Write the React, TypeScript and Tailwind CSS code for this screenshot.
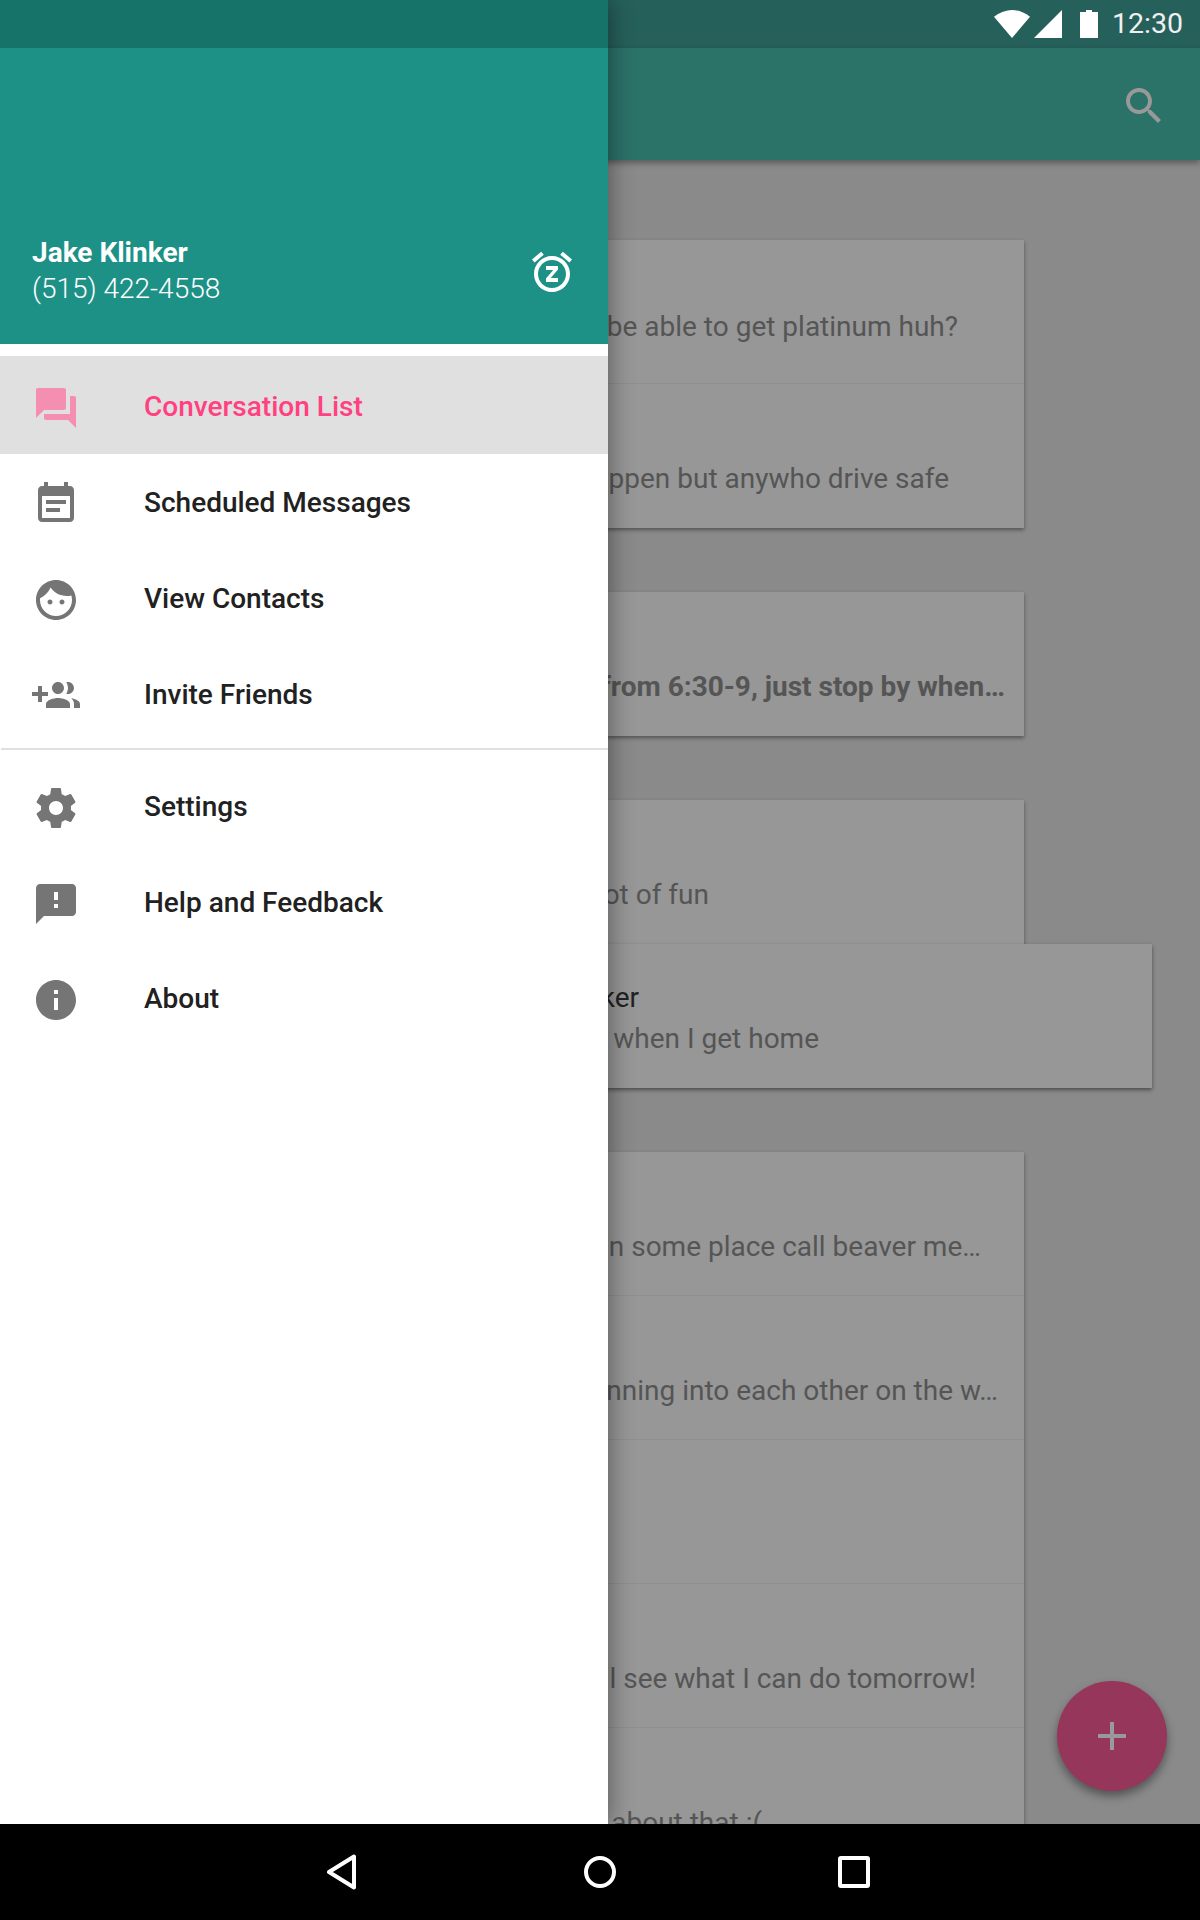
import type { ReactNode } from "react";

const ROBOTO = "[font-family:Roboto,sans-serif]";

function Icon({ d, className }: { d: string; className?: string }) {
  return (
    <svg viewBox="0 0 24 24" fill="currentColor" className={`size-12 shrink-0 ${className ?? ""}`}>
      <path d={d} />
    </svg>
  );
}

const paths = {
  forum:
    "M21 6h-2v9H6v2c0 .55.45 1 1 1h11l4 4V7c0-.55-.45-1-1-1zm-4 6V3c0-.55-.45-1-1-1H3c-.55 0-1 .45-1 1v14l4-4h10c.55 0 1-.45 1-1z",
  event:
    "M17 10H7v2h10v-2zm2-7h-1V1h-2v2H8V1H6v2H5c-1.11 0-1.99.9-1.99 2L3 19c0 1.1.89 2 2 2h14c1.1 0 2-.9 2-2V5c0-1.1-.9-2-2-2zm0 16H5V8h14v11zm-5-5H7v2h7v-2z",
  face:
    "M9 11.75c-.69 0-1.25.56-1.25 1.25s.56 1.25 1.25 1.25 1.25-.56 1.25-1.25-.56-1.25-1.25-1.25zm6 0c-.69 0-1.25.56-1.25 1.25s.56 1.25 1.25 1.25 1.25-.56 1.25-1.25-.56-1.25-1.25-1.25zM12 2C6.48 2 2 6.48 2 12s4.48 10 10 10 10-4.48 10-10S17.52 2 12 2zm0 18c-4.41 0-8-3.59-8-8 0-.29.02-.58.05-.86 2.36-1.05 4.23-2.98 5.21-5.37C11.07 8.33 14.05 10 17.42 10c.78 0 1.53-.09 2.25-.26.21.71.33 1.47.33 2.26 0 4.41-3.59 8-8 8z",
  groupAdd:
    "M8 10H5V7H3v3H0v2h3v3h2v-3h3v-2zm10 1c1.66 0 2.99-1.34 2.99-3S19.66 5 18 5c-.32 0-.63.05-.91.14.57.81.9 1.79.9 2.86s-.34 2.04-.9 2.86c.28.09.59.14.91.14zm-5 0c1.66 0 2.99-1.34 2.99-3S14.66 5 13 5c-1.66 0-3 1.34-3 3s1.34 3 3 3zm6.62 2.16c.83.73 1.38 1.66 1.38 2.84v2h3v-2c0-1.54-2.37-2.49-4.38-2.84zM13 13c-2 0-6 1-6 3v2h12v-2c0-2-4-3-6-3z",
  settings:
    "M19.43 12.98c.04-.32.07-.64.07-.98s-.03-.66-.07-.98l2.11-1.65c.19-.15.24-.42.12-.64l-2-3.46c-.12-.22-.39-.3-.61-.22l-2.49 1c-.52-.4-1.08-.73-1.69-.98l-.38-2.65C14.46 2.18 14.25 2 14 2h-4c-.25 0-.46.18-.49.42l-.38 2.65c-.61.25-1.17.59-1.69.98l-2.49-1c-.23-.09-.49 0-.61.22l-2 3.46c-.13.22-.07.49.12.64l2.11 1.65c-.04.32-.07.65-.07.98s.03.66.07.98l-2.11 1.65c-.19.15-.24.42-.12.64l2 3.46c.12.22.39.3.61.22l2.49-1c.52.4 1.08.73 1.69.98l.38 2.65c.03.24.24.42.49.42h4c.25 0 .46-.18.49-.42l.38-2.65c.61-.25 1.17-.59 1.69-.98l2.49 1c.23.09.49 0 .61-.22l2-3.46c.12-.22.07-.49-.12-.64l-2.11-1.65zM12 15.5c-1.93 0-3.5-1.57-3.5-3.5s1.57-3.5 3.5-3.5 3.5 1.57 3.5 3.5-1.57 3.5-3.5 3.5z",
  feedback:
    "M20 2H4c-1.1 0-1.99.9-1.99 2L2 22l4-4h14c1.1 0 2-.9 2-2V4c0-1.1-.9-2-2-2zm-7 12h-2v-2h2v2zm0-4h-2V6h2v4z",
  info: "M12 2C6.48 2 2 6.48 2 12s4.48 10 10 10 10-4.48 10-10S17.52 2 12 2zm1 15h-2v-6h2v6zm0-8h-2V7h2v2z",
  snooze:
    "M9 11h3.63L9 15.2V17h6v-2h-3.63L15 10.8V9H9v2zm13-5.28l-4.6-3.86-1.29 1.53 4.6 3.86L22 5.72zM7.88 3.39L6.6 1.86 2 5.71l1.29 1.53 4.59-3.85zM12 4c-4.97 0-9 4.03-9 9s4.02 9 9 9c4.97 0 9-4.03 9-9s-4.03-9-9-9zm0 16c-3.87 0-7-3.13-7-7s3.13-7 7-7 7 3.13 7 7-3.13 7-7 7z",
  search:
    "M15.5 14h-.79l-.28-.27C15.41 12.59 16 11.11 16 9.5 16 5.91 13.09 3 9.5 3S3 5.91 3 9.5 5.91 16 9.5 16c1.61 0 3.09-.59 4.23-1.57l.27.28v.79l5 4.99L20.49 19l-4.99-5zm-6 0C7.01 14 5 11.99 5 9.5S7.01 5 9.5 5 14 7.01 14 9.5 11.99 14 9.5 14z",
};

function StatusBar() {
  return (
    <div className="flex h-12 shrink-0 items-center justify-end bg-[#26605b] pr-[17px]">
      <svg viewBox="0 0 36 28" className="h-7 w-9" fill="#fff">
        <path d="M0 6.7Q18 -6.7 36 6.7L18 28Z" />
      </svg>
      <svg viewBox="0 0 28 28" className="ml-1 size-7" fill="#fff">
        <path d="M28 0V28H0Z" />
      </svg>
      <svg viewBox="0 0 18 28" className="ml-[18px] h-7 w-[18px]" fill="#fff">
        <path d="M6 0H12V2H18V28H0V2H6Z" />
      </svg>
      <span className="ml-[14px] text-[28.5px] leading-none text-[#f0f0f0]">12:30</span>
    </div>
  );
}

function Row({ children, className }: { children?: ReactNode; className: string }) {
  return (
    <div className={`flex h-36 items-start justify-end whitespace-nowrap border-[#8f8f8f] text-[28px] leading-10 text-[#555] ${className}`}>
      {children}
    </div>
  );
}

function ConversationList() {
  return (
    <div className="flex flex-1 flex-col overflow-hidden bg-[#8a8a8a] px-[176px] pt-20">
      <div className="shrink-0 bg-[#979797] shadow-[0_2px_4px_rgba(0,0,0,0.4)]">
        <Row className="border-b pt-[67px] pr-[66px]">be able to get platinum huh?</Row>
        <Row className="pt-[75px] pr-[75px]">ppen but anywho drive safe</Row>
      </div>
      <div className="mt-16 shrink-0 bg-[#979797] shadow-[0_2px_4px_rgba(0,0,0,0.4)]">
        <Row className="pt-[75px] pr-[19px] font-bold">from 6:30-9, just stop by when…</Row>
      </div>
      <div className="mt-16 shrink-0 bg-[#979797] shadow-[0_2px_4px_rgba(0,0,0,0.4)]">
        <Row className="pt-[75px] pr-[315px]">ot of fun</Row>
      </div>
      <div className="relative -mx-32 shrink-0 bg-[#979797] shadow-[0_2px_4px_rgba(0,0,0,0.45)]">
        <div className="flex h-36 flex-col items-end whitespace-nowrap pt-[34px] text-[28px] leading-10">
          <div className="pr-[513px] text-[#222]">ker</div>
          <div className="pr-[333px] pt-px text-[#555]">when I get home</div>
        </div>
      </div>
      <div className="mt-16 shrink-0 bg-[#979797] shadow-[0_2px_4px_rgba(0,0,0,0.4)]">
        <Row className="border-b pt-[75px] pr-[43px]">n some place call beaver me…</Row>
        <Row className="border-b pt-[75px] pr-[26px]">nning into each other on the w…</Row>
        <Row className="border-b" />
        <Row className="border-b pt-[75px] pr-[48px]">l see what I can do tomorrow!</Row>
        <Row className="pt-[75px] pr-[262px]">about that :(</Row>
      </div>
    </div>
  );
}

const topItems = [
  { label: "Conversation List", d: paths.forum, row: "h-[98px] bg-[#e0e0e0] text-[#ff4081]", icon: "mt-1.5 text-[#f48fb1]", text: "mt-1" },
  { label: "Scheduled Messages", d: paths.event, row: "h-24 text-[#212121]", icon: "mt-1 text-[#757575]", text: "mt-0.5" },
  { label: "View Contacts", d: paths.face, row: "h-24 text-[#212121]", icon: "mt-1 text-[#757575]", text: "mt-0.5" },
  { label: "Invite Friends", d: paths.groupAdd, row: "h-24 text-[#212121]", icon: "mt-1 text-[#757575]", text: "mt-0.5" },
];

const bottomItems = [
  { label: "Settings", d: paths.settings, row: "h-24 text-[#212121]", icon: "mt-1 text-[#757575]", text: "mt-0.5" },
  { label: "Help and Feedback", d: paths.feedback, row: "h-24 text-[#212121]", icon: "mt-1 text-[#757575]", text: "mt-0.5" },
  { label: "About", d: paths.info, row: "h-24 text-[#212121]", icon: "mt-1 text-[#757575]", text: "mt-0.5" },
];

function DrawerItem({ label, d, row, icon, text }: { label: string; d: string; row: string; icon: string; text: string }) {
  return (
    <div className={`flex items-center pl-8 text-[28px] font-medium ${row}`}>
      <Icon d={d} className={icon} />
      <span className={`ml-16 ${text}`}>{label}</span>
    </div>
  );
}

function Drawer() {
  return (
    <div className="absolute top-0 left-0 z-20 flex h-[1824px] w-[608px] flex-col bg-white shadow-[0_0_24px_rgba(0,0,0,0.45)]">
      <div className="h-12 shrink-0 bg-[#167369]" />
      <div className="flex h-[296px] shrink-0 items-end justify-between bg-[#1e9187] text-[28px] leading-9 text-white">
        <div className="pb-[37px] pl-8">
          <div className="font-bold">Jake Klinker</div>
          <div className="font-light">(515) 422-4558</div>
        </div>
        <Icon d={paths.snooze} className="mr-8 mb-12" />
      </div>
      <div className="pt-3">
        {topItems.map((item) => (
          <DrawerItem key={item.label} {...item} />
        ))}
      </div>
      <div className="mt-1.5 ml-px h-0.5 bg-[#e0e0e0]" />
      <div className="pt-2">
        {bottomItems.map((item) => (
          <DrawerItem key={item.label} {...item} />
        ))}
      </div>
    </div>
  );
}

function NavBar() {
  return (
    <div className="relative z-30 flex h-24 shrink-0 items-center bg-black pl-[324px]">
      <svg viewBox="0 0 36 36" className="size-9" fill="none" stroke="#fff" strokeWidth="4" strokeLinejoin="round">
        <path d="M5 18L30 2.5V33.5Z" />
      </svg>
      <div className="ml-56 size-8 rounded-full border-4 border-white" />
      <div className="ml-[222px] size-8 rounded-[3px] border-4 border-white" />
    </div>
  );
}

export default function App() {
  return (
    <div className={`relative flex h-[1920px] w-[1200px] flex-col overflow-hidden ${ROBOTO}`}>
      <StatusBar />
      <div className="relative z-10 flex h-28 shrink-0 items-start justify-end bg-[#2b7269] pt-[34px] pr-8 text-[#999] shadow-[0_3px_6px_rgba(0,0,0,0.35)]">
        <Icon d={paths.search} />
      </div>
      <ConversationList />
      <NavBar />
      <Drawer />
      <div className="absolute top-[1681px] left-[1057px] z-10 flex size-[110px] items-center justify-center rounded-full bg-[#96365a] shadow-[0_5px_10px_rgba(0,0,0,0.4)]">
        <svg viewBox="0 0 28 28" className="size-7" fill="#999">
          <path d="M12 0H16V12H28V16H16V28H12V16H0V12H12Z" />
        </svg>
      </div>
    </div>
  );
}
